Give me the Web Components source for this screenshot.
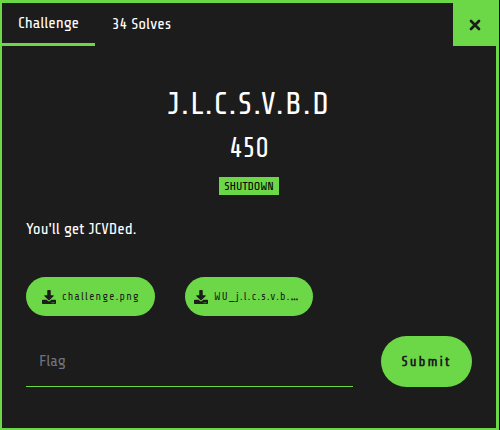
<!DOCTYPE html>
<html lang="en">
<head>
<meta charset="utf-8">
<title>J.L.C.S.V.B.D</title>
<style>
:root { --green: #6dd847; --ink: #1c1c1c; }
body { margin: 0; background: #0b0b0b; color: #fff; font: 16px/24px "Share Tech", "Roboto Condensed", "Liberation Sans", sans-serif; }
</style>
</head>
<body>
<challenge-dialog>
  <challenge-tabs slot="tabs"></challenge-tabs>
  <challenge-heading points="450" tag="SHUTDOWN">J.L.C.S.V.B.D</challenge-heading>
  <p>You'll get JCVDed.</p>
  <file-list>
    <file-link>challenge.png</file-link>
    <file-link>WU_j.l.c.s.v.b.<b>…</b></file-link>
  </file-list>
  <flag-form></flag-form>
</challenge-dialog>
<script>
const define = (name, html, setup) => customElements.define(name, class extends HTMLElement {
  connectedCallback() {
    if (this.shadowRoot) return;
    const root = this.attachShadow({ mode: "open" });
    const template = document.createElement("template");
    template.innerHTML = html;
    root.append(template.content.cloneNode(true));
    if (setup) setup(this, root);
  }
});

define("challenge-dialog", `
<style>
:host { display: block; padding-right: 1px; }
section { box-sizing: border-box; min-height: 100vh; background: var(--ink); border: 2px solid var(--green); border-top-width: 3px; border-right-width: 3px; }
header { display: flex; justify-content: space-between; align-items: stretch; height: 43px; }
button { width: 43px; padding: 0; border: 0; background: var(--green); display: grid; place-items: center; }
svg { width: 12px; height: 12px; }
main { padding: 36px 24px 40px; }
::slotted(p) { margin: 22px 0 36px; }
</style>
<section role="dialog" aria-label="Challenge">
  <header><slot name="tabs"></slot>
    <button type="button" aria-label="Close"><svg viewBox="0 0 12 12"><path d="M2 2L10 10M10 2L2 10" stroke="#1c1c1c" stroke-width="2.7" stroke-linecap="round"/></svg></button>
  </header>
  <main><slot></slot></main>
</section>`);

define("challenge-tabs", `
<style>
:host { display: block; }
nav { display: flex; height: 43px; }
button { font: inherit; color: inherit; background: none; border: 0; padding: 0 16px; min-width: 93px; white-space: nowrap; border-bottom: 1px solid transparent; }
.active { border-bottom: 3px solid var(--green); }
</style>
<nav><button type="button" class="active">Challenge</button><button type="button">34 Solves</button></nav>`);

define("challenge-heading", `
<style>
:host { display: block; text-align: center; }
h1, h2 { margin: 0; font-weight: 400; }
h1 { font-size: 32px; line-height: 45px; letter-spacing: .05em; }
h2 { font-size: 28px; line-height: 42px; }
div { display: flex; justify-content: center; margin-top: 8px; }
span { background: var(--green); color: #000; font-size: 12px; line-height: 18px; padding: 0 5px; }
</style>
<h1><slot></slot></h1><h2></h2><div><span></span></div>`, (host, root) => {
  root.querySelector("h2").textContent = host.getAttribute("points");
  root.querySelector("span").textContent = host.getAttribute("tag");
});

define("file-list", `
<style>:host { display: grid; grid-template-columns: 129px 128px; gap: 30px; }</style>
<slot></slot>`);

define("file-link", `
<style>
:host { display: block; min-width: 0; }
a { display: flex; align-items: center; gap: 6px; box-sizing: border-box; height: 39px; padding: 0 9px 0 16px; border-radius: 20px; background: var(--green); color: var(--ink); text-decoration: none; font-size: 11px; letter-spacing: .12em; }
:host(:last-child) a { padding-left: 9px; }
svg { width: 14px; height: 14px; flex: none; }
span { overflow: hidden; text-overflow: ellipsis; white-space: nowrap; }
</style>
<a href="#"><svg viewBox="0 0 512 512" aria-hidden="true"><path fill="#1c1c1c" d="M216 0h80c13.300 0 24 10.700 24 24v168h87.700c17.800 0 26.700 21.500 14.100 34.100L269.700 378.300c-7.500 7.500-19.800 7.500-27.300 0L90.100 226.100c-12.600-12.600-3.700-34.100 14.100-34.100H192V24c0-13.300 10.700-24 24-24zm296 376v112c0 13.300-10.700 24-24 24H24c-13.300 0-24-10.700-24-24V376c0-13.300 10.700-24 24-24h146.700l49 49c20.100 20.100 52.500 20.100 72.600 0l49-49H488c13.300 0 24 10.700 24 24zm-124 88c0-11-9-20-20-20s-20 9-20 20 9 20 20 20 20-9 20-20zm64 0c0-11-9-20-20-20s-20 9-20 20 9 20 20 20 20-9 20-20z"/></svg><span><slot></slot></span></a>`);

define("flag-form", `
<style>
:host { display: block; margin-top: 20px; }
form { display: flex; gap: 28px; }
input { flex: 1; min-width: 0; box-sizing: border-box; height: 51px; padding: 0 13px; border: 0; border-bottom: 1px solid var(--green); background: none; color: #fff; font: inherit; outline: 0; }
input::placeholder { color: #6c757d; opacity: 1; }
button { width: 91px; height: 51px; padding: 0; border: 0; border-radius: 26px; background: var(--green); color: var(--ink); font: inherit; font-weight: 700; font-size: 14px; letter-spacing: 2px; }
</style>
<form><input type="text" placeholder="Flag" aria-label="Flag"><button type="button">Submit</button></form>`);
</script>
</body>
</html>
